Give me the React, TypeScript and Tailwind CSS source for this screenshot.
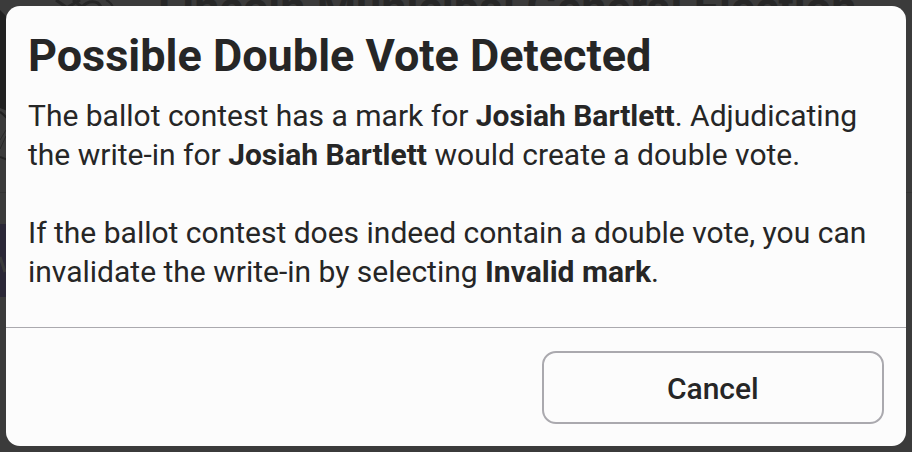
function BallotSeal() {
  return (
    <svg
      className="absolute top-0 left-0"
      width="152"
      height="170"
      viewBox="0 0 152 170"
      fill="none"
      aria-hidden="true"
    >
      <path d="M0 10L10 20V112L0 108Z" fill="#212121" />
      <path d="M0 112C2 113 4 115 8 119" stroke="#212121" strokeWidth="2" />
      <path d="M0 149L6 136M0 140L6 130" stroke="#2a2a2a" strokeWidth="1" />
      <path d="M0 157L8 160" stroke="#252525" strokeWidth="2" />
      <path d="M56 0L66 7" stroke="#272727" strokeWidth="3" />
      <path d="M68 7L80 0" stroke="#272727" strokeWidth="3" />
      <path d="M73 0L82 7" stroke="#272727" strokeWidth="3" />
      <path d="M82 7C88 0 98 0 101 7" stroke="#272727" strokeWidth="3" />
      <path d="M106 0C109 1 111 3 113 7" stroke="#272727" strokeWidth="2" />
    </svg>
  );
}

function BallotBackdrop() {
  return (
    <div className="absolute inset-0 overflow-hidden bg-[#3b3b3b] text-[#272727]" aria-hidden="true">
      <BallotSeal />
      <p className="absolute -top-3 left-[158px] text-[45px] leading-10 font-bold whitespace-nowrap">
        Lincoln Municipal General Election
      </p>
      <div className="absolute inset-x-0 top-48 h-px bg-[#333333]" />
      <div className="absolute top-56 left-0 h-[73px] w-5 bg-[#2b2837]">
        <svg width="8" height="73" viewBox="0 0 8 73" fill="none">
          <path d="M0 33L5 48" stroke="#3b3b3b" strokeWidth="3" />
        </svg>
      </div>
    </div>
  );
}

export default function App() {
  return (
    <div className="relative min-h-screen p-1.5 font-['Roboto',sans-serif]">
      <BallotBackdrop />
      <div
        role="alertdialog"
        aria-modal="true"
        aria-labelledby="dialog-title"
        aria-describedby="dialog-body"
        className="relative flex flex-col overflow-hidden rounded-[14px] bg-[#fcfcfc] text-[#262626]"
      >
        <div className="px-[22px] pt-5 pb-9 text-[30px] leading-[39px]">
          <h1 id="dialog-title" className="mb-2.5 text-[45px] leading-[60px] font-bold">
            Possible Double Vote Detected
          </h1>
          <div id="dialog-body">
            <p>
              The ballot contest has a mark for <strong>Josiah Bartlett</strong>. Adjudicating the
              write-in for <strong>Josiah Bartlett</strong> would create a double vote.
            </p>
            <p className="mt-[39px]">
              If the ballot contest does indeed contain a double vote, you can invalidate the
              write-in by selecting <strong>Invalid mark</strong>.
            </p>
          </div>
        </div>
        <div className="flex justify-end border-t border-[#aaa9ae] px-[22px] pt-[23px] pb-[22px]">
          <button
            type="button"
            className="w-2/5 rounded-[14px] border-2 border-[#aaa9ae] pt-4 pb-3.5 text-[30px] leading-[39px] font-medium"
          >
            Cancel
          </button>
        </div>
      </div>
    </div>
  );
}
